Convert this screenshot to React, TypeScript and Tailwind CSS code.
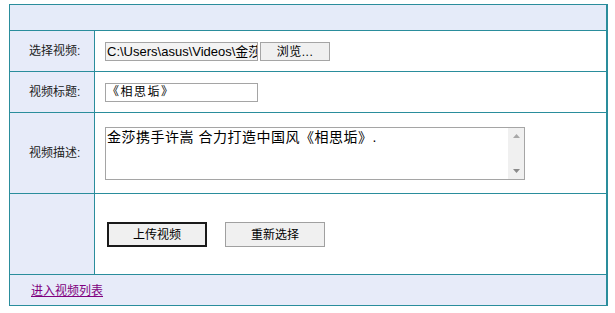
import React from 'react';

const cjk = { fontFamily: '"Liberation Sans", "Noto Sans CJK SC", sans-serif' };

function Label({ text }: { text: string }) {
    return (
        <td className="w-[85px] border border-[#2a8d9c] bg-[#e7ebf9] pl-[19px] text-left align-middle text-[12px] text-[#222]">
            {text}
        </td>
    );
}

export default function App() {
    return (
        <div className="min-h-[313px] w-[615px] bg-white pl-[9px] pt-[4px]" style={cjk}>
            <table className="w-[599px] table-fixed border-collapse border border-r-2 border-[#2a8d9c]">
                <colgroup>
                    <col className="w-[85px]" />
                    <col />
                </colgroup>
                <tbody>
                    {/* header bar */}
                    <tr className="h-[26px]">
                        <td colSpan={2} className="border border-[#2a8d9c] bg-[#e5ebf9]" />
                    </tr>

                    {/* file */}
                    <tr className="h-[41px]">
                        <Label text="选择视频:" />
                        <td className="border border-[#2a8d9c] pl-[10px] align-middle">
                            <div className="flex items-center gap-[2px] pt-[1px]">
                                <div className="flex h-[19px] w-[153px] items-center overflow-hidden whitespace-nowrap border border-[#a5a5a5] bg-[#f3f3f3] pl-[1px] text-[13px] text-black">
                                    C:\Users\asus\Videos\金莎
                                </div>
                                <button className="flex h-[19px] w-[70px] items-center justify-center border border-[#a5a5a5] bg-[#f0f0f0] text-[12px] tracking-[0.5px] text-black">
                                    浏览...
                                </button>
                            </div>
                        </td>
                    </tr>

                    {/* title */}
                    <tr className="h-[41px]">
                        <Label text="视频标题:" />
                        <td className="border border-[#2a8d9c] pl-[10px] align-middle">
                            <div className="flex h-[19px] w-[153px] items-center border border-[#a5a5a5] bg-white pl-[1px] text-[12px] tracking-[1.5px] text-black">
                                《相思垢》
                            </div>
                        </td>
                    </tr>

                    {/* description */}
                    <tr className="h-[81px]">
                        <Label text="视频描述:" />
                        <td className="border border-[#2a8d9c] pl-[10px] align-middle">
                            <div className="flex h-[53px] w-[420px] border border-[#a5a5a5] bg-white">
                                <div className="flex-1 pl-[1px] pt-[1px] text-[14px] leading-[17px] tracking-[0.5px] text-black">
                                    金莎携手许嵩 合力打造中国风《相思垢》.
                                </div>
                                <div className="flex w-[16px] flex-col items-center justify-between bg-[#f0f0f0] py-[6px]">
                                    <svg width="7" height="4" viewBox="0 0 7 4">
                                        <path d="M0 4 L3.5 0 L7 4 Z" fill="#a8a8a8" />
                                    </svg>
                                    <svg width="7" height="4" viewBox="0 0 7 4">
                                        <path d="M0 0 L3.5 4 L7 0 Z" fill="#8a8a8a" />
                                    </svg>
                                </div>
                            </div>
                        </td>
                    </tr>

                    {/* buttons */}
                    <tr className="h-[81px]">
                        <td className="border border-[#2a8d9c] bg-[#e7ebf9]" />
                        <td className="border border-[#2a8d9c] pl-[12px] align-middle">
                            <div className="flex items-center gap-[18px] pt-[1px]">
                                <button className="flex h-[25px] w-[100px] items-center justify-center border-2 border-[#1a1a1a] bg-[#f0f0f0] text-[12px] text-black">
                                    上传视频
                                </button>
                                <button className="flex h-[25px] w-[100px] items-center justify-center border border-[#a0a0a0] bg-[#f0f0f0] text-[12px] text-black">
                                    重新选择
                                </button>
                            </div>
                        </td>
                    </tr>

                    {/* footer */}
                    <tr className="h-[31px]">
                        <td colSpan={2} className="border border-[#2a8d9c] bg-[#e7ebf9] pl-[21px] align-middle">
                            <a href="#" className="text-[12px] text-[#800080] underline">
                                进入视频列表
                            </a>
                        </td>
                    </tr>
                </tbody>
            </table>
        </div>
    );
}
